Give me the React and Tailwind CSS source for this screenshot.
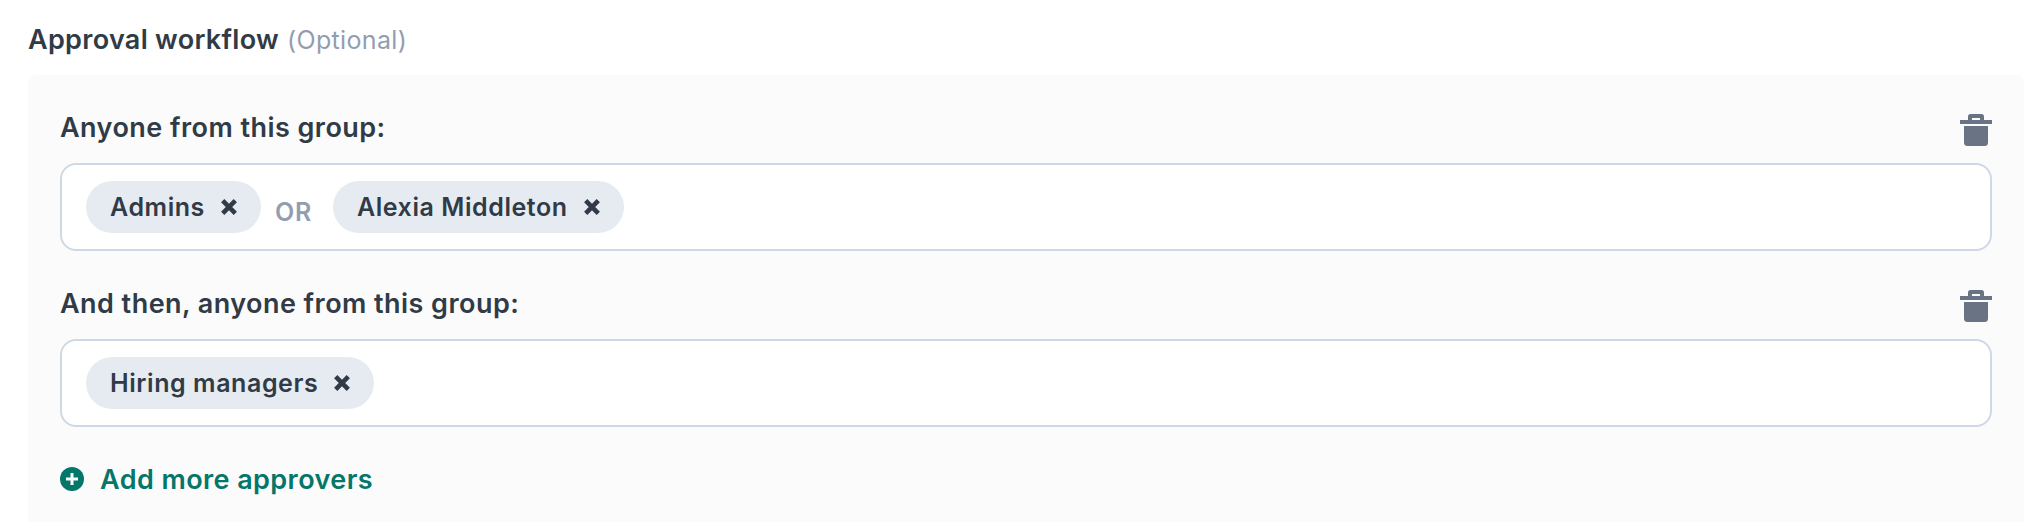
import { useState } from "react";

const initialSteps = [
  { label: "Anyone from this group:", approvers: ["Admins", "Alexia Middleton"] },
  { label: "And then, anyone from this group:", approvers: ["Hiring managers"] },
];

function TrashIcon() {
  return (
    <svg viewBox="0 0 32 32" className="w-8 h-8 fill-[#697383]">
      <path fillRule="evenodd" d="M8 6V2.500A2.500 2.500 0 0 1 10.500 0H21.500A2.500 2.500 0 0 1 24 2.500V6H32V10H0V6ZM12 4V6H20V4Z" />
      <path d="M4 12H28V28.500A3.500 3.500 0 0 1 24.500 32H7.500A3.500 3.500 0 0 1 4 28.500Z" />
    </svg>
  );
}

function CrossIcon() {
  return (
    <svg viewBox="0 0 16 16" className="w-4 h-4 stroke-[#303b47]" strokeWidth="4.6">
      <path d="M1.700 1.700L14.300 14.300M14.300 1.700L1.700 14.300" />
    </svg>
  );
}

function PlusIcon() {
  return (
    <svg viewBox="0 0 24 24" className="w-6 h-6">
      <circle cx="12" cy="12" r="12" fill="#05766a" />
      <path d="M12 6V18M6 12H18" stroke="#fbfbfb" strokeWidth="3" />
    </svg>
  );
}

function Chip({ name, onRemove }) {
  return (
    <div className="flex items-center h-[52px] pl-6 pr-6 gap-4 rounded-full bg-[#e6ebf2] text-[25px] font-semibold tracking-[0.57px]">
      <span className="pt-0.5">{name}</span>
      <button onClick={onRemove} className="cursor-pointer"><CrossIcon /></button>
    </div>
  );
}

function Step({ step, onDelete, onRemove }) {
  return (
    <div>
      <div className="flex justify-between h-[52px]">
        <h2 className="pt-px text-[27px] leading-8 font-semibold tracking-[0.45px]">{step.label}</h2>
        <button onClick={onDelete} className="h-8 mt-[3px] cursor-pointer"><TrashIcon /></button>
      </div>
      <div className="flex items-start h-[88px] px-6 pt-4 border-2 border-[#cfd8e6] rounded-2xl bg-white">
        {step.approvers.map((name, index) => (
          <div key={name} className="flex">
            {index > 0 && (
              <span className="w-[72px] pl-[14px] pt-[15px] leading-8 text-[25px] font-semibold tracking-[0.8px] text-[#939db0]">OR</span>
            )}
            <Chip name={name} onRemove={() => onRemove(name)} />
          </div>
        ))}
      </div>
    </div>
  );
}

export default function App() {
  let [steps, setSteps] = useState(initialSteps);

  const deleteStep = (i) => setSteps(steps.filter((_, index) => index !== i));

  const removeApprover = (i, name) => {
    setSteps(steps.map((step, index) => {
      if (index !== i)
        return step;
      return { ...step, approvers: step.approvers.filter((a) => a !== name) };
    }));
  }

  const addStep = () => {
    setSteps([...steps, { label: "And then, anyone from this group:", approvers: [] }]);
  }

  return (
    <div className="h-[522px] overflow-hidden bg-white pl-7 pr-3 pt-[23px] font-['Inter','Liberation_Sans',sans-serif] text-[#303b47]">
      <div className="flex items-baseline gap-2 h-[52px] pt-px leading-8">
        <h1 className="text-[27px] leading-8 font-semibold tracking-[0.3px]">Approval workflow</h1>
        <span className="text-[25px] leading-8 tracking-[0.35px] text-[#939db0]">(Optional)</span>
      </div>
      <div className="flex flex-col gap-9 h-[460px] px-8 pt-9 rounded-lg bg-[#fbfbfb]">
        {steps.map((step, i) => (
          <Step key={i} step={step} onDelete={() => deleteStep(i)} onRemove={(name) => removeApprover(i, name)} />
        ))}
        <button onClick={addStep} className="flex items-center gap-4 h-8 text-[27px] leading-8 font-semibold tracking-[0.42px] text-[#05766a] cursor-pointer">
          <PlusIcon />
          <span className="pt-0.5">Add more approvers</span>
        </button>
      </div>
    </div>
  );
}
